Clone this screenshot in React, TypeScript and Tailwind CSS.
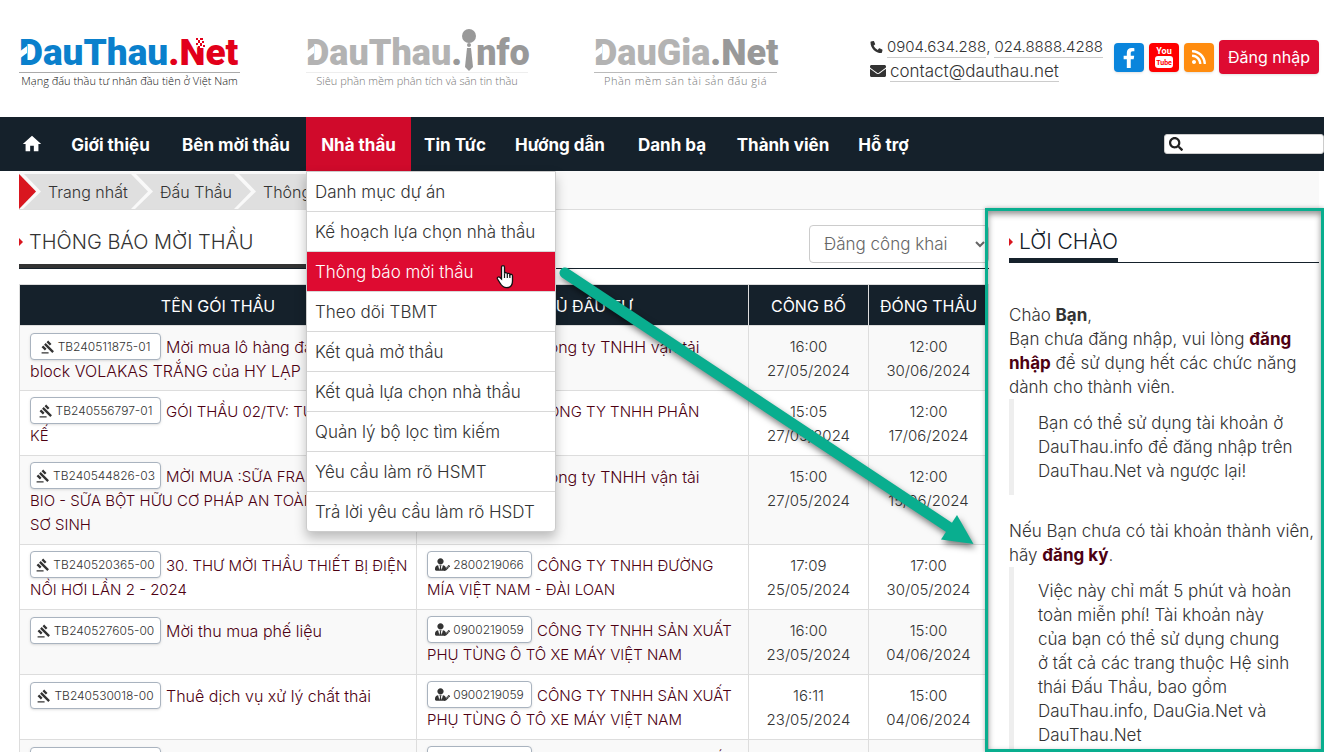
import { Fragment, useState } from "react";
import { FaEnvelope, FaFacebookF, FaPencilAlt, FaPhoneAlt, FaRss, FaSearch, FaUserTie } from "react-icons/fa";
import { MdGavel, MdHome } from "react-icons/md";

type Tender = {
  code: string;
  title: string[];
  tax: string;
  investor: string[];
  published: [string, string];
  closing: [string, string];
};

const NAV: { label: string; width: string }[] = [
  { label: "Giới thiệu", width: "w-[111px]" },
  { label: "Bên mời thầu", width: "w-[140px]" },
  { label: "Nhà thầu", width: "w-[105px]" },
  { label: "Tin Tức", width: "w-[88px]" },
  { label: "Hướng dẫn", width: "w-[122px]" },
  { label: "Danh bạ", width: "w-[102px]" },
  { label: "Thành viên", width: "w-[120px]" },
  { label: "Hỗ trợ", width: "w-[81px]" },
];

const SUBMENU = [
  "Danh mục dự án",
  "Kế hoạch lựa chọn nhà thầu",
  "Thông báo mời thầu",
  "Theo dõi TBMT",
  "Kết quả mở thầu",
  "Kết quả lựa chọn nhà thầu",
  "Quản lý bộ lọc tìm kiếm",
  "Yêu cầu làm rõ HSMT",
  "Trả lời yêu cầu làm rõ HSDT",
];

const TENDERS: Tender[] = [
  {
    code: "TB240511875-01",
    title: ["Mời mua lô hàng đá", "block VOLAKAS TRẮNG của HY LẠP"],
    tax: "0900219066",
    investor: ["Công ty TNHH vận tải"],
    published: ["16:00", "27/05/2024"],
    closing: ["12:00", "30/06/2024"],
  },
  {
    code: "TB240556797-01",
    title: ["GÓI THẦU 02/TV: TƯ VẤN", "KẾ"],
    tax: "0900219060",
    investor: ["CÔNG TY TNHH PHÂN", "BÓN VIỆT NHẬT"],
    published: ["15:05", "27/05/2024"],
    closing: ["12:00", "17/06/2024"],
  },
  {
    code: "TB240544826-03",
    title: ["MỜI MUA :SỮA FRANCE", "BIO - SỮA BỘT HỮU CƠ PHÁP AN TOÀN", "SƠ SINH"],
    tax: "0900219066",
    investor: ["Công ty TNHH vận tải"],
    published: ["15:00", "27/05/2024"],
    closing: ["12:00", "15/06/2024"],
  },
  {
    code: "TB240520365-00",
    title: ["30. THƯ MỜI THẦU THIẾT BỊ ĐIỆN", "NỒI HƠI LẦN 2 - 2024"],
    tax: "2800219066",
    investor: ["CÔNG TY TNHH ĐƯỜNG", "MÍA VIỆT NAM - ĐÀI LOAN"],
    published: ["17:09", "25/05/2024"],
    closing: ["17:00", "30/05/2024"],
  },
  {
    code: "TB240527605-00",
    title: ["Mời thu mua phế liệu"],
    tax: "0900219059",
    investor: ["CÔNG TY TNHH SẢN XUẤT", "PHỤ TÙNG Ô TÔ XE MÁY VIỆT NAM"],
    published: ["16:00", "23/05/2024"],
    closing: ["15:00", "04/06/2024"],
  },
  {
    code: "TB240530018-00",
    title: ["Thuê dịch vụ xử lý chất thải"],
    tax: "0900219059",
    investor: ["CÔNG TY TNHH SẢN XUẤT", "PHỤ TÙNG Ô TÔ XE MÁY VIỆT NAM"],
    published: ["16:11", "23/05/2024"],
    closing: ["15:00", "04/06/2024"],
  },
  {
    code: "TB240530020-00",
    title: ["Thuê dịch vụ vận chuyển"],
    tax: "0900219059",
    investor: ["CÔNG TY TNHH SẢN XUẤT", "PHỤ TÙNG Ô TÔ XE MÁY VIỆT NAM"],
    published: ["16:05", "23/05/2024"],
    closing: ["15:00", "04/06/2024"],
  },
];

function Lines({ items }: { items: string[] }) {
  return (
    <>
      {items.map((line, i) => (
        <Fragment key={i}>
          {i > 0 && <br />}
          {line}
        </Fragment>
      ))}
    </>
  );
}

// all-caps names are set one step smaller, they run wide otherwise
function nameSize(items: string[]) {
  return items[0] === items[0].toUpperCase() ? "text-[15px]" : "text-base";
}

// the slanted cut in the first letter of every logo
function LogoNotch() {
  return (
    <svg className="absolute left-0 top-0 h-9 w-6" viewBox="0 0 24 36" aria-hidden="true">
      <path d="M0 17L8 11V18L0 24Z" fill="#fff" />
    </svg>
  );
}

function Header() {
  return (
    <header className="flex h-[117px] items-start pl-[19px] pr-[5px]">
      <div className="flex gap-[66px] pt-[35px]">
        <a href="#net" className="relative block w-[221px]">
          <div className="h-[38px] whitespace-nowrap border-b border-[#aaa] font-[Roboto] text-[37px] font-black leading-9 text-[#0a80cc]">
            DauThau<span className="text-[#e2001a]">.Net</span>
          </div>
          <LogoNotch />
          <svg className="absolute left-[176px] top-[3px] h-3 w-3" viewBox="0 0 12 12" aria-hidden="true">
            <path d="M1 0h8v10H3L1 6z" fill="#fff" />
            <path d="M1 0h2v2H1zM5 0h3v2H5zM3 2h2v3H3zM7 3h2v2H7zM1 5h2v2H1zM5 5h2v3H5zM8 7h2v2H8zM3 8h2v2H3z" fill="#e2001a" />
          </svg>
          <div className="whitespace-nowrap text-center font-['Open_Sans'] text-[11px] leading-4 text-[#111]">
            Mạng đấu thầu tư nhân đầu tiên ở Việt Nam
          </div>
        </a>
        <a href="#info" className="relative block w-[222px]">
          <div className="flex h-[38px] border-b border-[#eee] font-[Roboto] text-4xl font-black leading-9 text-[#b3b3b3]">
            DauThau<span className="text-[#999]">.</span>
            <svg className="-mt-[7px] h-12 w-[14px] shrink-0" viewBox="1 0 14 48" aria-hidden="true">
              <circle cx="8" cy="8" r="7" fill="#999" />
              <circle cx="8" cy="17" r="2" fill="#999" />
              <path d="M6 20h4l2 19-4 4-4-4z" fill="#999" />
            </svg>
            <span className="text-[#999]">nfo</span>
          </div>
          <LogoNotch />
          <div className="whitespace-nowrap text-center font-['Open_Sans'] text-[11px] leading-4 text-[#777]">
            Siêu phần mềm phân tích và săn tin thầu
          </div>
        </a>
        <a href="#gia" className="relative block w-[183px]">
          <div className="h-[38px] whitespace-nowrap border-b border-[#bbb] font-[Roboto] text-4xl font-black leading-9 text-[#b3b3b3]">
            DauGia<span className="text-[#999]">.Net</span>
          </div>
          <LogoNotch />
          <div className="whitespace-nowrap text-center font-['Open_Sans'] text-[11px] leading-4 tracking-wider text-[#777]">
            Phần mềm săn tài sản đấu giá
          </div>
        </a>
      </div>

      <div className="ml-auto flex w-[244px] flex-col whitespace-nowrap pt-[35px] leading-6">
        <div className="flex h-6 items-center text-[15px]">
          <FaPhoneAlt className="mr-1 h-3 w-[13px] shrink-0" />
          <a href="tel:0904634288" className="border-b border-[#ccc] leading-5">0904.634.288</a>
          <span className="mr-1">,</span>
          <a href="tel:02488884288" className="border-b border-[#ccc] leading-5">024.8888.4288</a>
        </div>
        <div className="flex h-6 items-center text-[17px]">
          <FaEnvelope className="mr-1 h-4 w-4 shrink-0" />
          <a href="mailto:contact@dauthau.net" className="border-b border-[#ccc] leading-5">contact@dauthau.net</a>
        </div>
      </div>

      <div className="flex items-center gap-[5px] pt-10">
        <a href="#facebook" aria-label="Facebook" className="flex h-[29px] w-[30px] items-end justify-center rounded-[4px] bg-[#0a85dc] pb-1 text-white shadow-sm">
          <FaFacebookF className="h-5 w-5" />
        </a>
        <a href="#youtube" aria-label="YouTube" className="flex h-[29px] w-[30px] items-center justify-center rounded-[4px] bg-[#f00] shadow-sm">
          <svg viewBox="0 0 20 22" className="h-[22px] w-5">
            <text x="10" y="8" textAnchor="middle" fontSize="9" fontWeight="700" fontFamily="'Liberation Sans Narrow', Roboto, sans-serif" fill="#fff">You</text>
            <rect x="1" y="10" width="18" height="12" rx="3" fill="#fff" />
            <text x="10" y="19" textAnchor="middle" fontSize="7" fontWeight="700" fontFamily="'Liberation Sans Narrow', Roboto, sans-serif" fill="#f00">Tube</text>
          </svg>
        </a>
        <a href="#rss" aria-label="RSS" className="flex h-[29px] w-[30px] items-center justify-center rounded-[4px] bg-[#ff8c0f] text-white shadow-sm">
          <FaRss className="h-4 w-4" />
        </a>
        <button type="button" className="h-[34px] w-[100px] rounded-[4px] bg-[#de0b31] font-normal text-white shadow">
          Đăng nhập
        </button>
      </div>
    </header>
  );
}

function Submenu() {
  return (
    <ul className="absolute left-0 top-full z-20 w-[250px] rounded-b-[4px] border border-[#ccc] bg-white shadow-[0_6px_12px_rgba(0,0,0,0.25)]">
      {SUBMENU.map((item) => {
        const active = item === "Thông báo mời thầu";
        return (
          <li key={item} className="border-b border-[#d8d8d8] last:border-b-0">
            <a
              href="#menu"
              className={`block h-[39px] whitespace-nowrap px-2 text-[17px] leading-10 ${
                active ? "bg-[#de0b31] text-white" : "text-[#333]"
              }`}
            >
              {item}
            </a>
          </li>
        );
      })}
    </ul>
  );
}

function Nav() {
  return (
    <nav className="flex h-[54px] items-center bg-[#15212b] pl-2 text-white">
      <a href="#home" aria-label="Trang chủ" className="flex w-[47px] justify-center">
        <MdHome className="h-[22px] w-[22px]" />
      </a>
      {NAV.map((item) => {
        const open = item.label === "Nhà thầu";
        return (
          <div key={item.label} className={`relative h-full ${item.width}`}>
            <a
              href="#nav"
              className={`block h-full whitespace-nowrap text-center text-[17px] font-bold leading-[56px] ${open ? "bg-[#d00a2b]" : ""}`}
            >
              {item.label}
            </a>
            {open && <Submenu />}
          </div>
        );
      })}
      <label className="ml-auto flex h-5 w-40 items-center rounded-[3px] border border-[#ccc] bg-white px-1 text-[#222]">
        <FaSearch className="h-[14px] w-[14px] shrink-0" />
        <input type="search" aria-label="Tìm kiếm" className="min-w-0 flex-1 bg-transparent px-1 text-sm outline-none" />
      </label>
    </nav>
  );
}

function Chevron({ first }: { first?: boolean }) {
  return (
    <svg viewBox="0 0 22 35" className="h-[35px] w-[22px] shrink-0" aria-hidden="true">
      <path d="M0 0h5l17 17.500L4 35H0l17-17.500z" fill="#f9f9f9" />
      {first && <path d="M0 0l17 17.500L0 35z" fill="#d9161f" />}
    </svg>
  );
}

function Breadcrumbs() {
  return (
    <div className="ml-[19px] mr-[5px] flex h-[39px] items-end border-b border-[#ddd] bg-[#f9f9f9]">
      <div className="flex h-[35px] items-center whitespace-nowrap bg-[#dfdfdf] leading-[38px] text-[#333]">
        <Chevron first />
        <a href="#home" className="w-[90px] pl-[7px]">Trang nhất</a>
        <Chevron />
        <a href="#dau-thau" className="w-[81px] pl-[7px]">Đấu Thầu</a>
        <Chevron />
        <a href="#thong-bao" className="px-[7px]">Thông báo</a>
      </div>
    </div>
  );
}

function RedCaret() {
  return (
    <svg viewBox="0 0 5 8" className="mr-[5px] h-2 w-[5px] shrink-0" aria-hidden="true">
      <path d="M0 0l4 4-4 4z" fill="#d9161f" />
    </svg>
  );
}

function TenderTable() {
  const link = "text-[#4d0012]";
  const badge =
    "mr-[5px] -mt-2 -mb-1 inline-flex h-[27px] items-center justify-center gap-[3px] rounded-[4px] border border-[#a9b3bf] bg-white align-middle text-xs text-[#333] shadow-sm";
  const cell = "border border-[#ddd] pb-[7px] pt-[9px]";
  return (
    <table className="mt-[15px] w-full table-fixed border-collapse border border-[#ddd]">
      <colgroup>
        <col />
        <col className="w-[332px]" />
        <col className="w-[120px]" />
        <col className="w-[120px]" />
      </colgroup>
      <thead>
        <tr className="h-10 bg-[#15212b] text-white">
          {["TÊN GÓI THẦU", "CHỦ ĐẦU TƯ", "CÔNG BỐ", "ĐÓNG THẦU"].map((h) => (
            <th key={h} className={`${cell} whitespace-nowrap text-center font-normal leading-6`}>{h}</th>
          ))}
        </tr>
      </thead>
      <tbody>
        {TENDERS.map((t) => (
          <tr key={t.code} className="align-top odd:bg-[#f9f9f9] even:bg-white">
            <td className={`${cell} whitespace-nowrap px-[10px] ${nameSize(t.title)} leading-6`}>
              <a href="#goi-thau" className={link}>
                <span className={`${badge} w-[131px]`}>
                  <MdGavel className="h-[14px] w-[14px]" />
                  {t.code}
                </span>
                <Lines items={t.title} />
              </a>
            </td>
            <td className={`${cell} whitespace-nowrap px-[10px] ${nameSize(t.investor)} leading-6`}>
              <a href="#chu-dau-tu" className={link}>
                <span className={`${badge} w-[105px]`}>
                  <span className="flex w-[15px] items-end">
                    <FaUserTie className="h-[13px] w-[11px] shrink-0" />
                    <FaPencilAlt className="-ml-[2px] h-[6px] w-[6px] shrink-0" />
                  </span>
                  {t.tax}
                </span>
                <Lines items={t.investor} />
              </a>
            </td>
            <td className={`${cell} text-center text-[15px] leading-6`}>
              <Lines items={t.published} />
            </td>
            <td className={`${cell} text-center text-[15px] leading-6`}>
              <Lines items={t.closing} />
            </td>
          </tr>
        ))}
      </tbody>
    </table>
  );
}

function Welcome() {
  const strong = "font-bold text-[#4d0012]";
  return (
    <aside className="w-[310px] shrink-0 whitespace-nowrap text-[17px] leading-6">
      <div className="flex border-b border-[#15212b]">
        <h2 className="flex h-[52px] min-w-[109px] items-center border-b-4 border-[#15212b] pt-4 text-[21px] text-[#15212b]">
          <RedCaret />
          LỜI CHÀO
        </h2>
      </div>
      <div className="mt-10">
        <p>
          Chào <strong className="font-bold">Bạn</strong>,<br />
          Bạn chưa đăng nhập, vui lòng <a href="#login" className={strong}>đăng</a>
          <br />
          <a href="#login" className={strong}>nhập</a> để sử dụng hết các chức năng
          <br />
          dành cho thành viên.
        </p>
        <blockquote className="mb-6 border-l-[5px] border-[#eee] py-3 pl-6">
          Bạn có thể sử dụng tài khoản ở<br />
          DauThau.info để đăng nhập trên<br />
          DauThau.Net và ngược lại!
        </blockquote>
        <p>
          Nếu Bạn chưa có tài khoản thành viên,<br />
          hãy <a href="#register" className={strong}>đăng ký</a>.
        </p>
        <blockquote className="border-l-[5px] border-[#eee] py-3 pl-6">
          Việc này chỉ mất 5 phút và hoàn<br />
          toàn miễn phí! Tài khoản này<br />
          của bạn có thể sử dụng chung<br />
          ở tất cả các trang thuộc Hệ sinh<br />
          thái Đấu Thầu, bao gồm<br />
          DauThau.info, DauGia.Net và<br />
          DauThau.Net
        </blockquote>
      </div>
    </aside>
  );
}

// tutorial markup drawn over the page: frame, arrow and hand cursor
function Annotations() {
  return (
    <div className="pointer-events-none absolute inset-0 z-30" aria-hidden="true">
      <div className="absolute bottom-0 right-0 top-[208px] w-[339px] border-[3px] border-[#09ae8f] shadow-[inset_0_3px_6px_rgba(0,0,0,0.45),0_0_4px_rgba(0,0,0,0.3)]" />
      <svg className="absolute left-[550px] top-[255px] h-[310px] w-[440px]" viewBox="550 255 440 310">
        <g fill="#09ae8f" className="drop-shadow-[2px_4px_3px_rgba(0,0,0,0.5)]">
          <path d="M565 273L950 528" stroke="#09ae8f" strokeWidth="11" strokeLinecap="round" />
          <path d="M957 515L973.500 544L941 539.500z" />
        </g>
      </svg>
      <svg className="absolute left-[496px] top-[264px] h-[25px] w-[18px]" viewBox="0 0 18 25">
        <path
          d="M5.500 15V3.200C5.500 1 8.500 1 8.500 3.200V9.500C9 8 11.300 8.300 11.300 10 11.900 8.800 13.900 9.200 13.900 10.800 14.500 9.900 16.500 10.200 16.500 12V17C16.500 21.500 14 23.700 10.500 23.700 7 23.700 5.500 21.500 4 19L1.500 15C.7 13.500 2.500 12.300 3.700 13.300z"
          fill="#fff"
          stroke="#111"
          strokeWidth="1.300"
        />
        <path d="M8.500 9.500V14M11.300 10V14M13.900 11V14" stroke="#111" strokeWidth="1.200" />
      </svg>
    </div>
  );
}

export default function App() {
  const [filter, setFilter] = useState("Đăng công khai");

  return (
    <div className="relative h-screen overflow-hidden bg-white font-[Inter,sans-serif] text-base font-light text-[#333]">
      <Header />
      <Nav />
      <Breadcrumbs />
      <div className="flex gap-5 pl-[19px] pr-[5px]">
        <main className="min-w-0 flex-1">
          <div className="flex h-[59px] items-start justify-between border-b border-[#15212b]">
            <h1 className="flex h-[58px] w-[400px] items-center border-b-4 border-[#333] pt-[10px] text-xl">
              <RedCaret />
              THÔNG BÁO MỜI THẦU
            </h1>
            <select
              aria-label="Trạng thái"
              value={filter}
              onChange={(e) => setFilter(e.target.value)}
              className="mt-[15px] h-[38px] w-[180px] rounded-[4px] border border-[#ccc] bg-white px-[10px] text-[17px] text-[#666]"
            >
              <option>Đăng công khai</option>
              <option>Đăng nội bộ</option>
            </select>
          </div>
          <TenderTable />
        </main>
        <Welcome />
      </div>
      <Annotations />
    </div>
  );
}
